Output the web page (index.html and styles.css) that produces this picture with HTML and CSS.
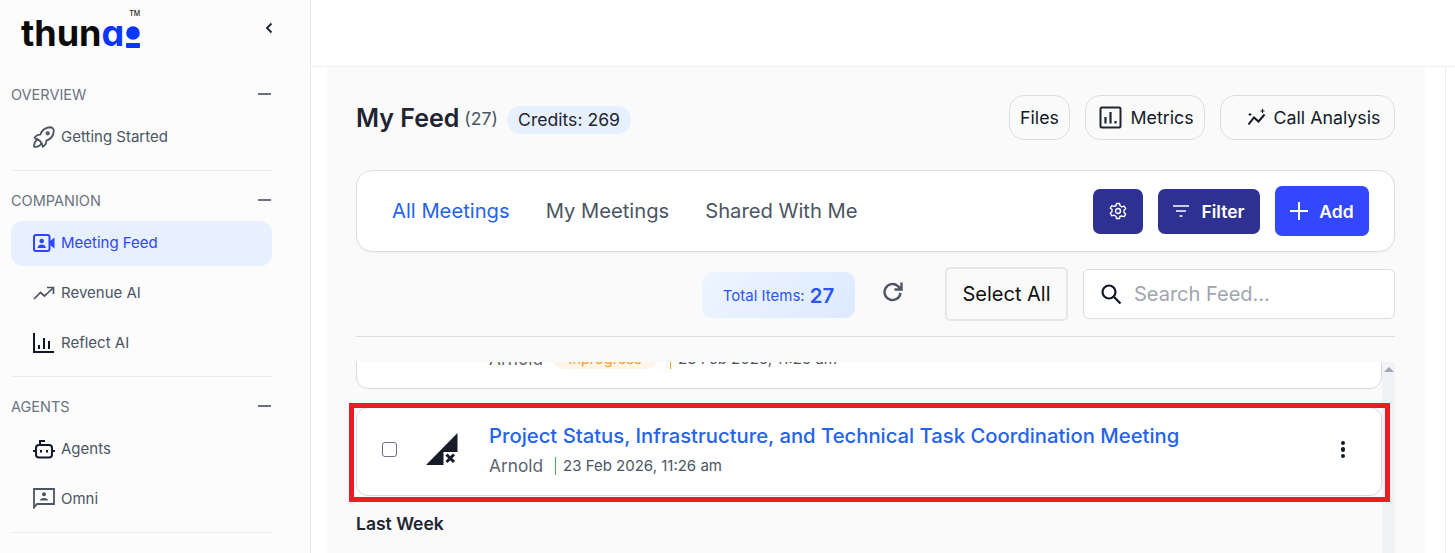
FILE: index.html
```html
<!DOCTYPE html>
<html lang="en">
<head>
  <meta charset="UTF-8">
  <meta name="viewport" content="width=device-width, initial-scale=1.0">
  <title>My Feed</title>
  <link rel="stylesheet" href="styles.css">
</head>

<body>
  <aside class="sidebar">
    <div class="brand">
      <div class="logo">
        <span class="logo-dark">thun</span><span class="logo-blue">ɑ</span>
        <svg class="logo-mark" width="14" height="22" viewBox="0 0 14 22"><circle cx="7" cy="7" r="6.800" fill="#0a36ff"/><rect x="0" y="17" width="14" height="5" rx="1" fill="#0a36ff"/></svg>
        <span class="logo-tm">TM</span>
      </div>
      <svg class="collapse" width="10" height="12" viewBox="0 0 10 12"><path d="M7.500 1.500 3 6l4.500 4.500" fill="none" stroke="#1f2937" stroke-width="2"/></svg>
    </div>

    <section class="nav-group">
      <div class="nav-label"><span>OVERVIEW</span><i class="minus"></i></div>
      <a class="nav-item" href="#">
        <svg width="22" height="22" viewBox="3 3 18 18" fill="none" stroke="#4b5563" stroke-width="1.500" stroke-linejoin="round"><path d="M4 13a8 8 0 0 1 7 7a6 6 0 0 0 3-5a9 9 0 0 0 6-8a3 3 0 0 0-3-3a9 9 0 0 0-8 6a6 6 0 0 0-5 3"/><path d="M7 14a6 6 0 0 0-3 6a6 6 0 0 0 6-3"/><circle cx="15" cy="9" r="1"/></svg>
        Getting Started
      </a>
    </section>

    <section class="nav-group">
      <div class="nav-label"><span>COMPANION</span><i class="minus"></i></div>
      <a class="nav-item active" href="#">
        <svg width="22" height="20" viewBox="0 0 22 20" fill="none"><rect x="1" y="2" width="15.500" height="16" rx="2" stroke="#2f45ff" stroke-width="2"/><circle cx="8.700" cy="8" r="2.300" fill="#2f45ff"/><path d="M4.500 15c.3-2.500 2-3.500 4.200-3.500s3.900 1 4.200 3.500z" fill="#2f45ff"/><path d="M17 8l4.500-3.500v11L17 12z" fill="#2f45ff"/></svg>
        Meeting Feed
      </a>
      <a class="nav-item" href="#">
        <svg width="22" height="14" viewBox="0 0 22 14" fill="none" stroke="#4b5563" stroke-width="1.700"><path d="M1 13l6.500-6.500 4 3.500L20 2"/><path d="M14 1.500h6.500V8"/></svg>
        Revenue AI
      </a>
      <a class="nav-item" href="#">
        <svg width="22" height="22" viewBox="0 0 22 22" fill="none" stroke="#111827" stroke-width="2"><path d="M1 1v19h20"/><path d="M6 13v4M11 6v11M16 9v8"/></svg>
        Reflect AI
      </a>
    </section>

    <section class="nav-group">
      <div class="nav-label"><span>AGENTS</span><i class="minus"></i></div>
      <a class="nav-item" href="#">
        <svg width="22" height="20" viewBox="0 0 22 20" fill="none" stroke="#111827" stroke-width="2"><rect x="3" y="6" width="16" height="12.500" rx="3"/><path d="M7 6V2h5M0 12h3M19 12h3"/><path d="M8 11v2.500M14 11v2.500"/></svg>
        Agents
      </a>
      <a class="nav-item" href="#">
        <svg width="22" height="21" viewBox="0 0 22 21" fill="none"><path d="M1 1h20v15H4l-3 3.500z" stroke="#4b5563" stroke-width="1.800"/><circle cx="11" cy="6.300" r="2" fill="#4b5563"/><path d="M7 12.500c.2-2 2-2.600 4-2.600s3.800.6 4 2.600z" fill="#4b5563"/></svg>
        Omni
      </a>
    </section>
  </aside>

  <div class="page">
    <header class="topbar"></header>

    <div class="page-body">
      <main class="content">
        <div class="feed-head">
          <div class="feed-title">
            <h1>My Feed</h1>
            <span class="feed-count">(27)</span>
            <span class="credits">Credits: 269</span>
          </div>
          <div class="head-actions">
            <button class="ghost-btn files-btn">Files</button>
            <button class="ghost-btn metrics-btn">
              <svg width="23" height="23" viewBox="0 0 23 23" fill="none" stroke="#1f2430" stroke-width="2"><rect x="1.500" y="1.500" width="20" height="20" rx="1.500"/><path d="M6.500 11v6.500M11.500 6v11.500" stroke-width="2.200"/><path d="M16.500 15v2.500" stroke-width="2.200"/></svg>
              Metrics
            </button>
            <button class="ghost-btn analysis-btn">
              <svg width="21" height="18" viewBox="0 0 21 18" fill="none" stroke="#111827" stroke-width="2"><path d="M1.500 15.500 7 8.500l4.500 4 6-7"/><path d="M15.500 0v4M13.500 2h4M3 4v3M1.500 5.500h3" stroke-width="1"/></svg>
              Call Analysis
            </button>
          </div>
        </div>

        <div class="tabs-card">
          <nav class="tabs">
            <a class="tab active" href="#">All Meetings</a>
            <a class="tab" href="#">My Meetings</a>
            <a class="tab" href="#">Shared With Me</a>
          </nav>
          <div class="tab-actions">
            <button class="solid-btn gear-btn">
              <svg width="18" height="18" viewBox="0 0 24 24" fill="none" stroke="#fff" stroke-width="1.800" stroke-linejoin="round"><path d="M10 2h4l.7 3 2.600 1.500 3-.9 2 3.400-2.300 2.100v3l2.300 2.100-2 3.400-3-.9L14.700 19l-.7 3h-4l-.7-3-2.600-1.500-3 .9-2-3.400 2.300-2.100v-3L1.700 8.300l2-3.400 3 .9L9.300 5z"/><circle cx="12" cy="12" r="3.300"/></svg>
            </button>
            <button class="solid-btn filter-btn">
              <svg width="16" height="12" viewBox="0 0 16 12" fill="none" stroke="#fff" stroke-width="1.500"><path d="M0 1h16M3 6h10M6.500 11h3"/></svg>
              Filter
            </button>
            <button class="solid-btn add-btn">
              <svg width="18" height="18" viewBox="0 0 18 18" fill="none" stroke="#fff" stroke-width="2"><path d="M9 0v18M0 9h18"/></svg>
              Add
            </button>
          </div>
        </div>

        <div class="toolbar">
          <div class="total"><span>Total Items:</span> <strong>27</strong></div>
          <svg class="refresh" width="22" height="20" viewBox="0 0 22 20" fill="none" stroke="#4b5563" stroke-width="2.400"><path d="M18.500 11a8 8 0 1 1-2.600-6.900L18.500 6.500"/><path d="M19.500 .5v7h-7"/></svg>
          <button class="select-all">Select All</button>
          <div class="search">
            <svg width="22" height="22" viewBox="0 0 22 22" fill="none" stroke="#111827" stroke-width="2.200"><circle cx="9" cy="9" r="6.500"/><path d="M14 14l6.500 6.500"/></svg>
            <span>Search Feed...</span>
          </div>
        </div>

        <div class="feed">
          <div class="feed-list">
            <article class="card scrolled">
              <div class="card-meta">
                <span class="owner">Arnold</span>
                <span class="status">Inprogress</span>
                <span class="date date-orange">23 Feb 2026, 11:26 am</span>
              </div>
            </article>

            <article class="card">
              <span class="check"></span>
              <svg class="signal" width="32" height="32" viewBox="0 0 32 32"><path d="M31.500 0v19H17.500v13H0z" fill="#171c2b"/><path d="M20.500 21.500l7.500 7.500M28 21.500 20.500 29" stroke="#171c2b" stroke-width="3" fill="none"/></svg>
              <div class="card-text">
                <a class="card-title" href="#">Project Status, Infrastructure, and Technical Task Coordination Meeting</a>
                <div class="card-meta">
                  <span class="owner">Arnold</span>
                  <span class="date date-green">23 Feb 2026, 11:26 am</span>
                </div>
              </div>
              <span class="dots"><i></i><i></i><i></i></span>
            </article>

            <h2 class="week">Last Week</h2>
          </div>
          <div class="scrollbar"><i></i></div>
          <div class="highlight"></div>
        </div>
      </main>
      <div class="side-strip"></div>
    </div>
  </div>
</body>
</html>
```

FILE: styles.css
```css
/* Global Styles */
* {
  box-sizing: border-box;
}

html,
body {
  height: 100%;
}

body {
  margin: 0;
  display: flex;
  overflow: hidden;
  background: #fff;
  color: #1f2430;
  font-family: Inter, "Liberation Sans", sans-serif;
}

a {
  text-decoration: none;
  color: inherit;
}

button {
  font-family: inherit;
  cursor: pointer;
}

/* Sidebar */
.sidebar {
  width: 311px;
  flex-shrink: 0;
  padding: 0 38px 0 11px;
  background: #fcfcfc;
  border-right: 1px solid #e9eaec;
}

.brand {
  height: 65px;
  display: flex;
  align-items: flex-start;
  justify-content: space-between;
}

.logo {
  display: flex;
  align-items: flex-end;
  height: 48px;
  margin-left: 10px;
  position: relative;
  font-family: Inter, sans-serif;
  font-size: 36px;
  font-weight: 700;
  line-height: 30px;
  letter-spacing: 0;
}

.logo-dark {
  color: #0b0b0b;
}

.logo-blue {
  color: #0a36ff;
}

.logo-mark {
  margin: 0 0 0 2px;
}

.logo-tm {
  position: absolute;
  top: 10px;
  right: 0;
  font-size: 7px;
  font-weight: 500;
  line-height: 8px;
  letter-spacing: 0;
  color: #222;
}

.collapse {
  margin: 22px -2px 0 0;
}

.nav-group {
  padding-bottom: 5px;
  border-bottom: 1px solid #ececee;
}

.nav-label {
  height: 50px;
  padding-top: 8px;
  display: flex;
  align-items: center;
  justify-content: space-between;
  font-size: 14.5px;
  color: #6b7280;
}

.minus {
  width: 13px;
  height: 2px;
  margin-right: 1px;
  background: #6b7280;
}

.nav-item {
  height: 45px;
  margin-bottom: 5px;
  padding: 0 0 2px 22px;
  display: flex;
  align-items: center;
  gap: 6px;
  border-radius: 12px;
  font-size: 15px;
  color: #4b5563;
}

.nav-item svg {
  width: 22px;
  flex-shrink: 0;
}

.nav-item.active {
  background: #e6f0ff;
  color: #2f45ff;
}

/* Page */
.page {
  flex: 1;
  min-width: 0;
  display: flex;
  flex-direction: column;
}

.topbar {
  height: 67px;
  flex-shrink: 0;
  background: #fff;
  border-bottom: 1px solid #f0f0f2;
}

.page-body {
  flex: 1;
  min-height: 0;
  display: flex;
  padding-left: 16px;
}

.content {
  width: 1098px;
  flex-shrink: 0;
  padding: 28px 30px 0 29px;
  background: #fafafb;
  display: flex;
  flex-direction: column;
}

.side-strip {
  width: 21px;
  border-right: 1px solid #e9eaec;
}

/* Header */
.feed-head {
  height: 45px;
  display: flex;
  align-items: center;
  justify-content: space-between;
}

.feed-title {
  display: flex;
  align-items: center;
}

h1 {
  margin: 0;
  font-size: 25px;
  font-weight: 600;
  color: #1f2430;
}

.feed-count {
  margin: 2px 0 0 5px;
  font-size: 17.7px;
  color: #4b5563;
}

.credits {
  margin: 4px 0 0 9px;
  padding: 0 11px;
  height: 28px;
  line-height: 28px;
  border-radius: 14px;
  background: #e6f0ff;
  font-size: 17.6px;
  color: #1f2430;
}

.head-actions {
  display: flex;
  gap: 15px;
}

.ghost-btn {
  height: 45px;
  display: flex;
  align-items: center;
  justify-content: center;
  gap: 8px;
  border: 1px solid #dcdddf;
  border-radius: 15px;
  background: #fafafb;
  font-size: 17.8px;
  color: #111827;
  padding: 0;
}

.files-btn {
  width: 61px;
}

.metrics-btn {
  width: 120px;
  padding-left: 3px;
}

.analysis-btn {
  width: 175px;
  gap: 6px;
  padding-left: 12px;
}

/* Tabs */
.tabs-card {
  height: 82px;
  margin-top: 30px;
  padding: 0 25px 0 35px;
  display: flex;
  align-items: center;
  justify-content: space-between;
  background: #fff;
  border: 1px solid #dcdddf;
  border-radius: 16px;
  box-shadow: 0 1px 2px rgba(0, 0, 0, 0.04);
}

.tabs {
  display: flex;
  gap: 36px;
  padding-bottom: 2px;
}

.tab {
  font-size: 20.2px;
  color: #4b5563;
}

.tab.active {
  color: #2563eb;
}

.tab-actions {
  display: flex;
  align-items: center;
  gap: 15px;
}

.solid-btn {
  height: 45px;
  display: flex;
  align-items: center;
  justify-content: center;
  border: none;
  border-radius: 7px;
  background: #2e3192;
  font-size: 17.5px;
  font-weight: 600;
  color: #fff;
  padding: 0;
}

.gear-btn {
  width: 50px;
}

.filter-btn {
  width: 102px;
  gap: 12px;
}

.add-btn {
  width: 94px;
  height: 50px;
  gap: 11px;
  background: #3347ff;
}

/* Toolbar */
.toolbar {
  height: 85px;
  display: flex;
  align-items: center;
  justify-content: flex-end;
  border-bottom: 1px solid #dcdddf;
}

.total {
  width: 153px;
  height: 46px;
  margin: 2px 27px 0 0;
  display: flex;
  align-items: center;
  justify-content: center;
  gap: 5px;
  border-radius: 10px;
  background: linear-gradient(135deg, #eef5ff, #dce9ff);
  font-size: 15px;
  color: #2f55f0;
}

.total strong {
  font-size: 20.5px;
  font-weight: 600;
}

.refresh {
  margin: -5px 41px 0 0;
}

.select-all {
  width: 123px;
  height: 54px;
  margin-right: 15px;
  border: 2px solid #e6e7ec;
  border-radius: 5px;
  background: #fafafb;
  font-size: 20px;
  color: #111;
}

.search {
  width: 312px;
  height: 50px;
  padding-left: 16px;
  display: flex;
  align-items: center;
  gap: 12px;
  background: #fff;
  border: 1px solid #dcdddf;
  border-radius: 6px;
  font-size: 20px;
  color: #a0a5b1;
}

/* Feed */
.feed {
  flex: 1;
  min-height: 0;
  margin-top: 25px;
  display: flex;
  position: relative;
}

.feed-list {
  flex: 1;
  min-width: 0;
  overflow: hidden;
}

.scrollbar {
  width: 13px;
  background: #f1f2f5;
  flex-shrink: 0;
}

.scrollbar i {
  display: block;
  width: 0;
  margin: 5px auto 0;
  border-left: 5px solid transparent;
  border-right: 5px solid transparent;
  border-bottom: 5px solid #a3a8b3;
}

.card {
  height: 89px;
  margin-bottom: 18px;
  padding: 0 36px 0 25px;
  display: flex;
  align-items: center;
  background: #fff;
  border: 1px solid #d7d9e2;
  border-radius: 12px;
}

.card.scrolled {
  margin-top: -62px;
  align-items: flex-start;
  padding: 48px 0 0 132px;
}

.check {
  width: 15px;
  height: 15px;
  margin-top: -4px;
  flex-shrink: 0;
  border: 1px solid #6b7280;
  border-radius: 3px;
}

.signal {
  margin: -5px 0 0 29px;
  flex-shrink: 0;
}

.card-text {
  flex: 1;
  margin: -4px 0 0 31px;
}

.card-title {
  display: block;
  font-size: 20.25px;
  font-weight: 500;
  line-height: 26px;
  color: #2563eb;
}

.card-meta {
  height: 20px;
  margin-top: 7px;
  display: flex;
  align-items: center;
  font-size: 15px;
  color: #4b5563;
}

.scrolled .card-meta {
  margin-top: 0;
}

.owner {
  margin-top: -2px;
  font-size: 17.3px;
  color: #5b6270;
}

.status {
  margin-left: 10px;
  height: 20px;
  line-height: 20px;
  width: 104px;
  text-align: center;
  border-radius: 10px;
  background: #fff4ea;
  font-size: 14.5px;
  color: #f59a23;
}

.date {
  margin-left: 12px;
  padding-left: 7px;
  border-left: 1px solid;
  line-height: 18px;
}

.date-orange {
  border-left-color: #f59a23;
  line-height: 20px;
  margin-left: 13px;
}

.date-green {
  border-left-color: #4caf50;
}

.dots {
  margin-top: -4px;
  display: flex;
  flex-direction: column;
  gap: 2px;
}

.dots i {
  width: 4.5px;
  height: 4.5px;
  border-radius: 50%;
  background: #171c2b;
}

.week {
  margin: -1px 0 0;
  font-size: 17.5px;
  font-weight: 600;
  line-height: 22px;
  color: #1f2430;
}

/* Red marker around the card */
.highlight {
  position: absolute;
  top: 41px;
  left: -7px;
  right: 5px;
  height: 99px;
  border: 5px solid #ed1c24;
  pointer-events: none;
}
```
